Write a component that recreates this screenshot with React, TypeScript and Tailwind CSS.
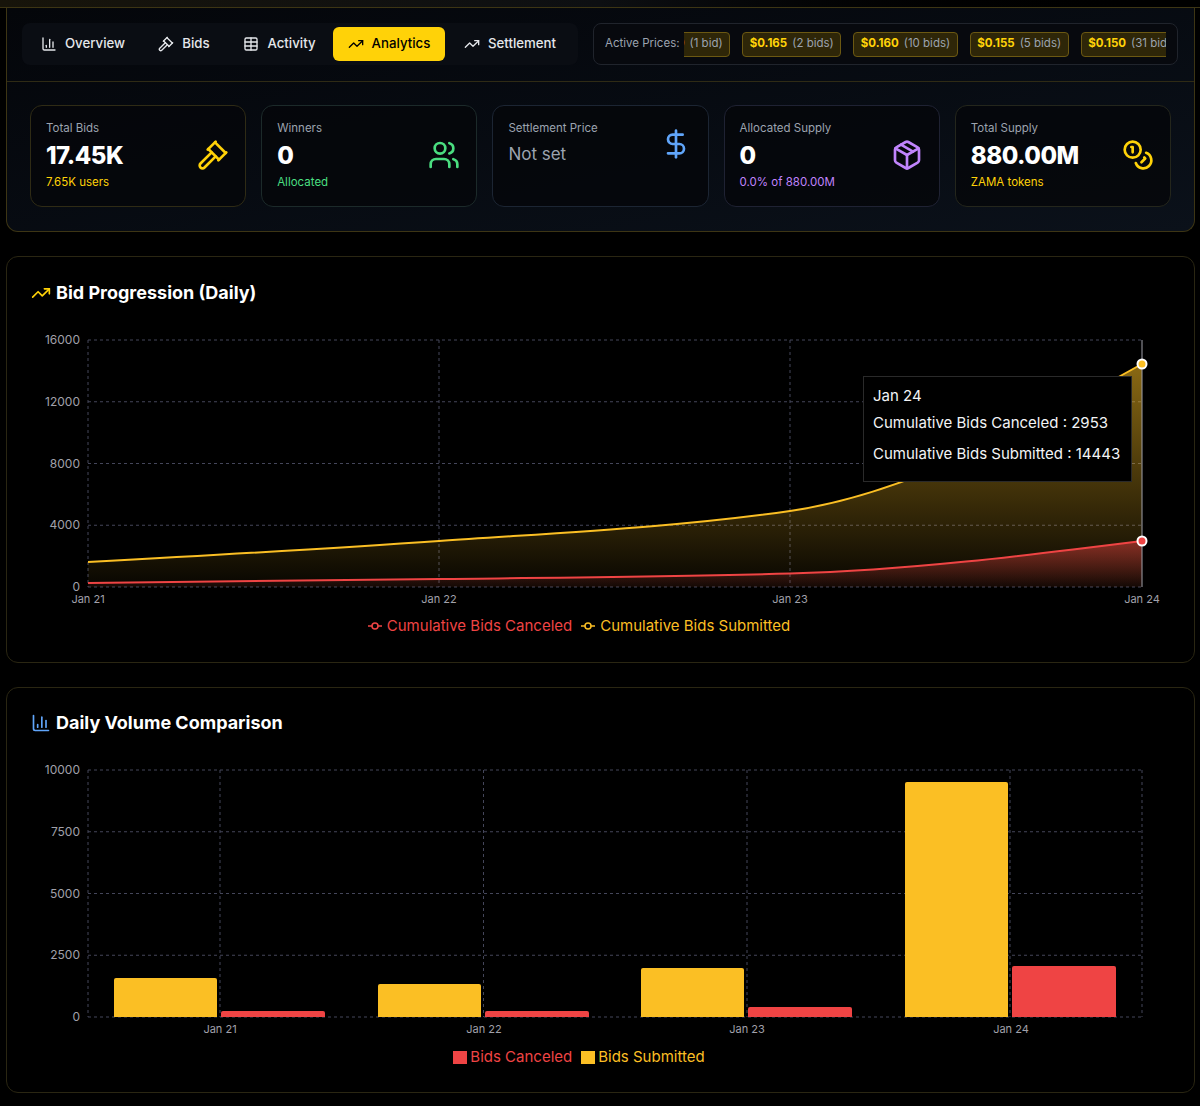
import { BarChart3, Coins, DollarSign, Gavel, Package, Table, TrendingUp, Users } from "lucide-react";

const font = { fontFamily: "Inter, 'Liberation Sans', sans-serif" };

const tabs = [
  { label: "Overview", icon: BarChart3, w: "w-[114px]" },
  { label: "Bids", icon: Gavel, w: "w-[84px]" },
  { label: "Activity", icon: Table, w: "w-[103px]" },
  { label: "Analytics", icon: TrendingUp, w: "w-[112px]", active: true },
  { label: "Settlement", icon: TrendingUp, w: "w-[126px]" },
];

const chips = [
  { price: "$0.170", bids: "(1 bid)" },
  { price: "$0.165", bids: "(2 bids)" },
  { price: "$0.160", bids: "(10 bids)" },
  { price: "$0.155", bids: "(5 bids)" },
  { price: "$0.150", bids: "(31 bids)" },
];

// monotone-x curve, same shape the chart library draws
function curve(pts: number[][]) {
  const s = pts.slice(1).map((p, i) => (p[1] - pts[i][1]) / (p[0] - pts[i][0]));
  const m = pts.map((_, i) => {
    if (i === 0 || i === pts.length - 1) return 0;
    return s[i - 1] * s[i] <= 0 ? 0 : (2 * s[i - 1] * s[i]) / (s[i - 1] + s[i]);
  });
  m[0] = (3 * s[0] - m[1]) / 2;
  m[pts.length - 1] = (3 * s[s.length - 1] - m[pts.length - 2]) / 2;
  let d = `M${pts[0][0]},${pts[0][1]}`;
  for (let i = 0; i < pts.length - 1; i++) {
    const dx = (pts[i + 1][0] - pts[i][0]) / 3;
    d += `C${pts[i][0] + dx},${pts[i][1] + m[i] * dx} ${pts[i + 1][0] - dx},${pts[i + 1][1] - m[i + 1] * dx} ${pts[i + 1][0]},${pts[i + 1][1]}`;
  }
  return d;
}

const submitted = curve([[88, 562], [439, 541], [790, 511], [1142, 364]]);
const canceled = curve([[88, 583], [439, 579], [790, 573.5], [1142, 541]]);

function Grid({ top, xs, labels }: { top: number; xs: number[]; labels: string[] }) {
  const bottom = top + 247;
  return (
    <g>
      {[0, 1, 2, 3, 4].map((i) => {
        const y = top + (i * 247) / 4;
        return (
          <g key={i}>
            <line x1="88" x2="1142" y1={y} y2={y} stroke="#44465a" strokeDasharray="3 3" />
            <text x="80" y={y + 4} textAnchor="end" fontSize="12" fill="#a1a1aa">{labels[i]}</text>
          </g>
        );
      })}
      {xs.map((x) => (
        <line key={x} x1={x} x2={x} y1={top} y2={bottom} stroke="#44465a" strokeDasharray="3 3" />
      ))}
    </g>
  );
}

function StatCard({ title, value, sub, subColor, icon: Icon, iconColor, border, muted }: any) {
  return (
    <div className={`h-[102px] rounded-xl border ${border} bg-[#05060a]/80 pb-2 pl-[15px] pr-4 pt-[14px]`}>
      <div className="flex items-center justify-between">
        <div>
          <p className="mb-[4px] text-[11.5px] leading-4 text-[#9ca3af]">{title}</p>
          {muted ? (
            <p className="text-[17px] leading-7 text-[#9ca3af]">{value}</p>
          ) : (
            <p className="text-2xl font-extrabold tracking-[-0.02em] text-white">{value}</p>
          )}
          {sub && <p className={`mt-[2px] text-[11.5px] leading-4 ${subColor}`}>{sub}</p>}
        </div>
        <Icon className={`h-8 w-8 ${iconColor}`} strokeWidth={2} />
      </div>
    </div>
  );
}

function LineDot({ color }: { color: string }) {
  return (
    <svg width="14" height="14" viewBox="0 0 14 14">
      <line x1="0" x2="14" y1="7" y2="7" stroke={color} strokeWidth="1.5" />
      <circle cx="7" cy="7" r="3" fill="#000" stroke={color} strokeWidth="1.5" />
    </svg>
  );
}

export default function App() {
  return (
    <div className="min-h-[1106px] bg-black text-white" style={font}>
      <div className="h-[8px] border-b border-[#3d3514] bg-gradient-to-r from-[#17140a] via-[#0d0f12] to-black" />

      {/* Header panel */}
      <div className="ml-[6px] mr-[5px] rounded-b-xl border-x border-b border-[#3d3514] bg-gradient-to-br from-[#04060a] to-[#0b111a]">
        <div className="flex h-[74px] items-center gap-[15px] border-b border-[#2f2b15] pb-px pl-[15px] pr-[16px]">
          <div className="flex h-[42px] w-[556px] shrink-0 items-center gap-[2px] rounded-lg bg-[#0a0d13] px-1">
            {tabs.map((t) => (
              <div
                key={t.label}
                className={`flex h-[34px] items-center justify-center gap-2 rounded-md text-[13.25px] font-medium ${t.w} ${
                  t.active ? "bg-[#ffd208] text-black" : "text-[#e5e7eb]"
                }`}>
                <t.icon className="h-4 w-4" />
                {t.label}
              </div>
            ))}
          </div>
          <div className="flex h-[42px] min-w-0 flex-1 items-center rounded-lg border border-[#20242c] bg-[#07090e] pl-[11px] pr-[11px]">
            <span className="mr-[7px] w-[72px] shrink-0 whitespace-nowrap text-[11.5px] text-[#9ca3af]">Active Prices:</span>
            <div className="min-w-0 flex-1 overflow-hidden">
              <div className="ml-[-44px] flex w-max gap-3">
                {chips.map((c) => (
                  <div key={c.price} className="flex h-[25px] items-center gap-[5px] whitespace-nowrap rounded border border-[#6b5812] bg-[#2e2608] px-[6.5px] text-[11.5px] text-[#9ca3af]">
                    <b className="font-bold text-[#ffd208]">{c.price}</b>
                    {c.bids}
                  </div>
                ))}
              </div>
            </div>
          </div>
        </div>

        <div className="grid grid-cols-5 gap-[15px] px-[23px] pb-[24px] pt-[23px]">
          <StatCard title="Total Bids" value="17.45K" sub="7.65K users" subColor="text-[#ffd208]" icon={Gavel} iconColor="text-[#ffd208]" border="border-[#2f2b15]" />
          <StatCard title="Winners" value="0" sub="Allocated" subColor="text-[#4ade80]" icon={Users} iconColor="text-[#4ade80]" border="border-[#1c2a2a]" />
          <StatCard title="Settlement Price" value="Not set" muted icon={DollarSign} iconColor="text-[#60a5fa]" border="border-[#1c2533]" />
          <StatCard title="Allocated Supply" value="0" sub="0.0% of 880.00M" subColor="text-[#c084fc]" icon={Package} iconColor="text-[#c084fc]" border="border-[#1f2233]" />
          <StatCard title="Total Supply" value="880.00M" sub="ZAMA tokens" subColor="text-[#ffd208]" icon={Coins} iconColor="text-[#ffd208]" border="border-[#24261c]" />
        </div>
      </div>

      {/* Bid progression */}
      <div className="ml-[6px] mr-[5px] mt-6 h-[407px] rounded-xl border border-[#2a2612] bg-black">
        <div className="flex items-center gap-[5px] px-6 pt-[22px]">
          <TrendingUp className="h-5 w-5 text-[#ffd208]" />
          <h2 className="text-lg font-bold">Bid Progression (Daily)</h2>
        </div>
        <div className="relative mt-[18px]">
          <svg viewBox="7 325 1187 285" className="block h-[285px] w-[1187px]" style={font}>
            <defs>
              <linearGradient id="yellowFill" x1="0" y1="0" x2="0" y2="1">
                <stop offset="0%" stopColor="#fbbf24" stopOpacity="0.55" />
                <stop offset="100%" stopColor="#fbbf24" stopOpacity="0.03" />
              </linearGradient>
              <linearGradient id="redFill" x1="0" y1="0" x2="0" y2="1">
                <stop offset="0%" stopColor="#ef4444" stopOpacity="0.5" />
                <stop offset="100%" stopColor="#ef4444" stopOpacity="0.05" />
              </linearGradient>
            </defs>
            <Grid top={340} xs={[88, 439, 790]} labels={["16000", "12000", "8000", "4000", "0"]} />
            <path d={`${submitted}L1142,587L88,587Z`} fill="url(#yellowFill)" />
            <path d={`${canceled}L1142,587L88,587Z`} fill="url(#redFill)" />
            <path d={submitted} fill="none" stroke="#fbbf24" strokeWidth="2" />
            <path d={canceled} fill="none" stroke="#ef4444" strokeWidth="2" />
            <line x1="1142" x2="1142" y1="340" y2="587" stroke="#a1a1aa" />
            <circle cx="1142" cy="364" r="4.5" fill="#fbbf24" stroke="#fff" strokeWidth="2" />
            <circle cx="1142" cy="541" r="4.5" fill="#ef4444" stroke="#fff" strokeWidth="2" />
            {[["Jan 21", 88], ["Jan 22", 439], ["Jan 23", 790], ["Jan 24", 1142]].map(([l, x]) => (
              <text key={l} x={x} y="603" textAnchor="middle" fontSize="11" fill="#a1a1aa">{l}</text>
            ))}
          </svg>
          <div className="absolute left-[856px] top-[51px] h-[106px] w-[269px] whitespace-nowrap border border-[#2a2a2a] bg-black px-[9px] pt-[9px] text-[15px] text-[#f3f4f6]">
            <p className="leading-5">Jan 24</p>
            <p className="mt-[7px] leading-5">Cumulative Bids Canceled : 2953</p>
            <p className="mt-[11px] leading-5">Cumulative Bids Submitted : 14443</p>
          </div>
        </div>
        <div className="mt-[4px] flex items-center justify-center gap-[9px] pr-[43px] text-[15px] leading-6">
          <span className="flex items-center gap-[5px] text-[#ef4444]">
            <LineDot color="#ef4444" />
            Cumulative Bids Canceled
          </span>
          <span className="flex items-center gap-[5px] text-[#fbbf24]">
            <LineDot color="#fbbf24" />
            Cumulative Bids Submitted
          </span>
        </div>
      </div>

      {/* Daily volume */}
      <div className="ml-[6px] mr-[5px] mt-6 h-[406px] rounded-xl border border-[#2a2612] bg-black">
        <div className="flex items-center gap-[5px] px-6 pt-[21px]">
          <BarChart3 className="h-5 w-5 text-[#60a5fa]" />
          <h2 className="text-lg font-bold">Daily Volume Comparison</h2>
        </div>
        <svg viewBox="7 755 1187 285" className="mt-[18px] block h-[285px] w-[1187px]" style={font}>
          <Grid top={770} xs={[88, 220, 483.5, 747, 1010]} labels={["10000", "7500", "5000", "2500", "0"]} />
          <line x1="1142" x2="1142" y1="770" y2="1017" stroke="#44465a" strokeDasharray="3 3" />
          {[
            [114, 978, 1011, "Jan 21"],
            [378, 984, 1011, "Jan 22"],
            [641, 968, 1007, "Jan 23"],
            [905, 782, 966, "Jan 24"],
          ].map(([x, y1, y2, l]: any) => (
            <g key={l}>
              <path d={`M${x},1017V${y1 + 2}q0,-2 2,-2H${x + 101}q2,0 2,2V1017Z`} fill="#fbbf24" />
              <path d={`M${x + 107},1017V${y2 + 2}q0,-2 2,-2H${x + 209}q2,0 2,2V1017Z`} fill="#ef4444" />
              <text x={x + 106} y="1033" textAnchor="middle" fontSize="11" fill="#a1a1aa">{l}</text>
            </g>
          ))}
        </svg>
        <div className="mt-[5px] flex items-center justify-center gap-[9px] pr-[43px] text-[15px] leading-6">
          <span className="flex items-center gap-[3px] text-[#ef4444]">
            <span className="h-[13px] w-[14px] bg-[#ef4444]" />
            Bids Canceled
          </span>
          <span className="flex items-center gap-[3px] text-[#fbbf24]">
            <span className="h-[13px] w-[14px] bg-[#fbbf24]" />
            Bids Submitted
          </span>
        </div>
      </div>
    </div>
  );
}
